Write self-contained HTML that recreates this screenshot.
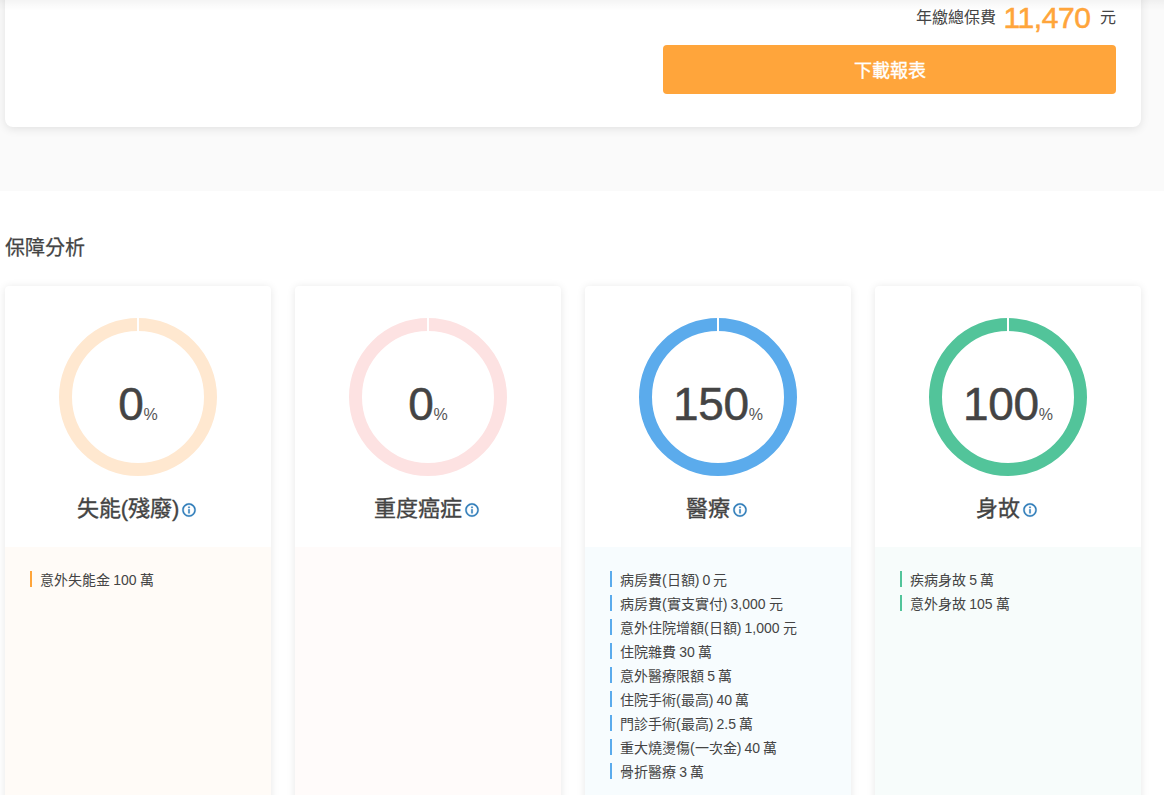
<!DOCTYPE html>
<html lang="zh-TW">
<head>
<meta charset="utf-8">
<title>保障分析</title>
<style>
*{box-sizing:border-box;margin:0;padding:0}
html,body{width:1164px;height:795px;overflow:hidden;background:#fff}
body{font-family:"Liberation Sans",sans-serif;color:#444;position:relative}
.topbg{position:absolute;left:0;top:0;width:1164px;height:191px;background:#fafafa}
.topshade{position:absolute;left:0;top:0;width:1164px;height:11px;background:linear-gradient(rgba(0,0,0,.045),rgba(0,0,0,.02) 45%,rgba(0,0,0,0))}
.topcard{position:absolute;left:5px;top:-40px;width:1136px;height:167px;background:#fff;border-radius:8px;box-shadow:0 2px 10px rgba(0,0,0,.10)}
.fee{position:absolute;right:49px;top:0;height:34px;white-space:nowrap;display:flex;align-items:baseline}
.fee .l{font-size:16px;color:#444;position:absolute;left:916px;top:7px}
.btn{position:absolute;left:663px;top:45px;width:453px;height:49px;background:#ffa53b;border-radius:4px;color:#fff;font-size:18px;text-align:center;line-height:53px;-webkit-text-stroke:.35px #fff}
.title{position:absolute;left:5px;top:232.5px;-webkit-text-stroke:.25px #444;font-size:20px;line-height:30px;color:#444}
.card{position:absolute;top:286px;width:266px;height:520px;background:#fff;border-radius:4px 4px 0 0;box-shadow:0 1px 8px rgba(0,0,0,.10);overflow:hidden}
.card svg.ring{position:absolute;left:53px;top:31px}
.num{position:absolute;left:0;width:266px;top:88px;letter-spacing:-.3px;-webkit-text-stroke:.5px #444;text-align:center;font-size:46px;line-height:60px;color:#444;white-space:nowrap}
.num small{font-size:16px;color:#555;-webkit-text-stroke:0;letter-spacing:0;position:relative;top:0;left:0}
.lab{position:absolute;left:-1px;width:266px;top:205.5px;-webkit-text-stroke:.35px #444;text-align:center;font-size:22px;line-height:34px;color:#444;white-space:nowrap}
.lab svg{vertical-align:-2.3px;margin-left:2px}
.panel{position:absolute;left:0;top:261px;width:266px;height:260px;padding:24px 25px}
.panel div{font-size:14px;line-height:16px;height:16px;margin-bottom:8px;padding-left:8px;border-left:2px solid;white-space:nowrap;word-spacing:-.75px;letter-spacing:0px}
.panel div span{color:#444;position:relative;top:.7px}
</style>
</head>
<body>
<div class="topbg"></div>
<div class="topcard"></div>
<div class="topshade"></div>
<div style="position:absolute;left:915.5px;top:6px;font-size:16px;line-height:24px;color:#444;white-space:nowrap">年繳總保費</div>
<div style="position:absolute;left:1003.6px;top:-1.2px;font-size:30px;line-height:38px;color:#ffa53b;white-space:nowrap;letter-spacing:-.45px;-webkit-text-stroke:.55px #ffa53b">11,470</div>
<div style="position:absolute;left:1099.6px;top:6px;font-size:16px;line-height:24px;color:#444">元</div>
<div class="btn">下載報表</div>
<div class="title">保障分析</div>

<div class="card" style="left:5px">
  <svg class="ring" width="160" height="160" viewBox="0 0 160 160"><circle cx="80" cy="80" r="72.5" fill="none" stroke="#ffe8d0" stroke-width="13"/><rect x="79" y="0" width="2" height="15" fill="#fff"/></svg>
  <div class="num">0<small>%</small></div>
  <div class="lab">失能(殘廢)<svg class="ic" width="16" height="16" viewBox="0 0 24 24"><path fill="#2d7bb9" stroke="#2d7bb9" stroke-width=".5" d="M11 17h2v-6h-2v6zm1-15C6.48 2 2 6.48 2 12s4.48 10 10 10 10-4.48 10-10S17.52 2 12 2zm0 18c-4.41 0-8-3.59-8-8s3.59-8 8-8 8 3.59 8 8-3.59 8-8 8zM11 9h2V7h-2v2z"/></svg></div>
  <div class="panel" style="background:#fffbf7"><div style="border-color:#ffa53b"><span>意外失能金 100 萬</span></div></div>
</div>

<div class="card" style="left:295px">
  <svg class="ring" width="160" height="160" viewBox="0 0 160 160"><circle cx="80" cy="80" r="72.5" fill="none" stroke="#fde2e2" stroke-width="13"/><rect x="79" y="0" width="2" height="15" fill="#fff"/></svg>
  <div class="num">0<small>%</small></div>
  <div class="lab">重度癌症<svg class="ic" width="16" height="16" viewBox="0 0 24 24"><path fill="#2d7bb9" stroke="#2d7bb9" stroke-width=".5" d="M11 17h2v-6h-2v6zm1-15C6.48 2 2 6.48 2 12s4.48 10 10 10 10-4.48 10-10S17.52 2 12 2zm0 18c-4.41 0-8-3.59-8-8s3.59-8 8-8 8 3.59 8 8-3.59 8-8 8zM11 9h2V7h-2v2z"/></svg></div>
  <div class="panel" style="background:#fffbfa"></div>
</div>

<div class="card" style="left:585px">
  <svg class="ring" width="160" height="160" viewBox="0 0 160 160"><circle cx="80" cy="80" r="72.5" fill="none" stroke="#5babec" stroke-width="13"/><rect x="79" y="0" width="2" height="15" fill="#fff"/></svg>
  <div class="num">150<small>%</small></div>
  <div class="lab">醫療<svg class="ic" width="16" height="16" viewBox="0 0 24 24"><path fill="#2d7bb9" stroke="#2d7bb9" stroke-width=".5" d="M11 17h2v-6h-2v6zm1-15C6.48 2 2 6.48 2 12s4.48 10 10 10 10-4.48 10-10S17.52 2 12 2zm0 18c-4.41 0-8-3.59-8-8s3.59-8 8-8 8 3.59 8 8-3.59 8-8 8zM11 9h2V7h-2v2z"/></svg></div>
  <div class="panel" style="background:#f7fcfe">
    <div style="border-color:#5babec"><span>病房費(日額) 0 元</span></div>
    <div style="border-color:#5babec"><span>病房費(實支實付) 3,000 元</span></div>
    <div style="border-color:#5babec"><span>意外住院增額(日額) 1,000 元</span></div>
    <div style="border-color:#5babec"><span>住院雜費 30 萬</span></div>
    <div style="border-color:#5babec"><span>意外醫療限額 5 萬</span></div>
    <div style="border-color:#5babec"><span>住院手術(最高) 40 萬</span></div>
    <div style="border-color:#5babec"><span>門診手術(最高) 2.5 萬</span></div>
    <div style="border-color:#5babec"><span>重大燒燙傷(一次金) 40 萬</span></div>
    <div style="border-color:#5babec"><span>骨折醫療 3 萬</span></div>
  </div>
</div>

<div class="card" style="left:875px">
  <svg class="ring" width="160" height="160" viewBox="0 0 160 160"><circle cx="80" cy="80" r="72.5" fill="none" stroke="#52c49a" stroke-width="13"/><rect x="79" y="0" width="2" height="15" fill="#fff"/></svg>
  <div class="num">100<small>%</small></div>
  <div class="lab">身故<svg class="ic" width="16" height="16" viewBox="0 0 24 24"><path fill="#2d7bb9" stroke="#2d7bb9" stroke-width=".5" d="M11 17h2v-6h-2v6zm1-15C6.48 2 2 6.48 2 12s4.48 10 10 10 10-4.48 10-10S17.52 2 12 2zm0 18c-4.41 0-8-3.59-8-8s3.59-8 8-8 8 3.59 8 8-3.59 8-8 8zM11 9h2V7h-2v2z"/></svg></div>
  <div class="panel" style="background:#f7fcfb">
    <div style="border-color:#52c49a"><span>疾病身故 5 萬</span></div>
    <div style="border-color:#52c49a"><span>意外身故 105 萬</span></div>
  </div>
</div>
</body>
</html>
